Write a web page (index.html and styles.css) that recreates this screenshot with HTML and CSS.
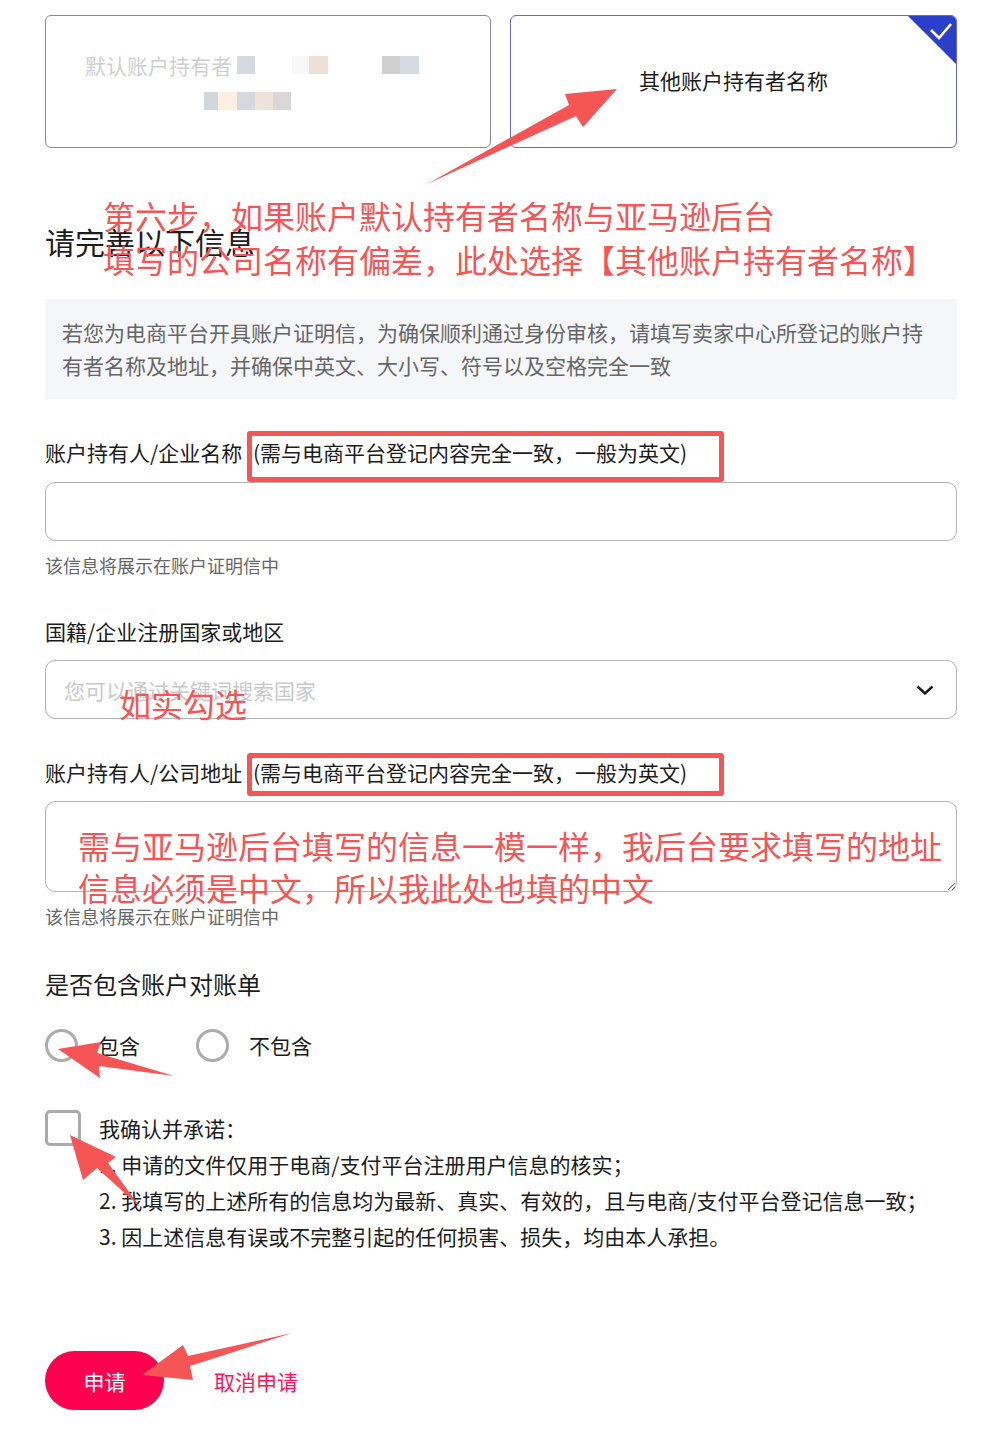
FILE: index.html
```html
<!DOCTYPE html>
<html lang="zh-CN">
  <head>
    <meta charset="UTF-8" />
    <meta name="viewport" content="width=device-width, initial-scale=1.0" />
    <title>开具账户证明信</title>
    <link rel="stylesheet" href="styles.css">
  </head>
  <body>
    <main class="page">
      <!-- 持有者名称选择 -->
      <div class="cards">
        <div class="card">
          <div class="blur">
            <div class="blur-row">
              <span class="muted">默认账户持有者</span>
              <span class="px px-a"></span>
              <span class="px px-b"></span>
              <span class="px px-c"></span>
              <span class="px px-d"></span>
              <span class="px px-e"></span>
            </div>
            <div class="blur-row second">
              <span class="px px-f"></span>
              <span class="px px-g"></span>
              <span class="px px-h"></span>
              <span class="px px-i"></span>
              <span class="px px-j"></span>
            </div>
          </div>
        </div>
        <div class="card active">
          <span class="card-text">其他账户持有者名称</span>
          <span class="corner">
            <svg width="48" height="48" viewBox="0 0 48 48">
              <polygon points="0,0 48,0 48,48" fill="#2b40c8" />
              <polyline points="23,14 31,22 43,8" fill="none" stroke="#fff" stroke-width="2.6" />
            </svg>
          </span>
        </div>
      </div>

      <!-- 标题 -->
      <div class="title-wrap">
        <h2 class="title">请完善以下信息</h2>
        <p class="tip tip-step">第六步，如果账户默认持有者名称与亚马逊后台<br>填写的公司名称有偏差，此处选择【其他账户持有者名称】</p>
      </div>

      <div class="info">若您为电商平台开具账户证明信，为确保顺利通过身份审核，请填写卖家中心所登记的账户持有者名称及地址，并确保中英文、大小写、符号以及空格完全一致</div>

      <!-- 企业名称 -->
      <div class="field">
        <label class="label">账户持有人/企业名称 <span class="hint">(需与电商平台登记内容完全一致，一般为英文)</span><span class="mark mark-name"></span></label>
        <div class="input"></div>
        <div class="help">该信息将展示在账户证明信中</div>
      </div>

      <!-- 国家 -->
      <div class="field">
        <label class="label">国籍/企业注册国家或地区</label>
        <div class="select">
          <span class="placeholder">您可以通过关键词搜索国家</span>
          <svg class="chevron" width="18" height="10" viewBox="0 0 18 10">
            <polyline points="1.5,1.5 9,8.5 16.5,1.5" fill="none" stroke="#1a1a1a" stroke-width="2.4" />
          </svg>
          <span class="tip tip-select">如实勾选</span>
        </div>
      </div>

      <!-- 地址 -->
      <div class="field">
        <label class="label">账户持有人/公司地址 <span class="hint">(需与电商平台登记内容完全一致，一般为英文)</span><span class="mark mark-addr"></span></label>
        <div class="area-wrap">
          <textarea class="textarea"></textarea>
          <span class="tip tip-area">需与亚马逊后台填写的信息一模一样，我后台要求填写的地址<br>信息必须是中文，所以我此处也填的中文</span>
        </div>
        <div class="help">该信息将展示在账户证明信中</div>
      </div>

      <!-- 对账单 -->
      <h3 class="subtitle">是否包含账户对账单</h3>
      <div class="radios">
        <div class="radio"><span class="circle"></span>包含</div>
        <div class="radio"><span class="circle"></span>不包含</div>
      </div>

      <div class="agree">
        <span class="checkbox"></span>
        <div class="terms">
          <div>我确认并承诺：</div>
          <div>1. 申请的文件仅用于电商/支付平台注册用户信息的核实；</div>
          <div>2. 我填写的上述所有的信息均为最新、真实、有效的，且与电商/支付平台登记信息一致；</div>
          <div>3. 因上述信息有误或不完整引起的任何损害、损失，均由本人承担。</div>
        </div>
      </div>

      <div class="actions">
        <button class="btn">申请</button>
        <a class="cancel">取消申请</a>
      </div>
    </main>

    <!-- 标注箭头 -->
    <svg class="arrows" width="1001" height="1436" viewBox="0 0 1001 1436">
      <polygon points="427,184 569,105 565,94 617,89 583,127 576,116" />
      <polygon points="58,1049 101,1042 97,1053 174,1076 99,1066 100,1078" />
      <polygon points="70,1135 116,1157 108,1163 140,1207 97,1168 83,1180" />
      <polygon points="142,1375 183,1345 188,1356 292,1333 190,1366 193,1380" />
    </svg>
  </body>
</html>
```

FILE: styles.css
```css
body {
  margin: 0;
  padding: 0;
  position: relative;
  background: #fff;
  color: #1c1c1c;
  font-family: "Noto Sans CJK SC", "Noto Sans", sans-serif;
}

.page {
  width: 912px;
  margin-left: 45px;
  padding-top: 15px;
  padding-bottom: 26px;
}

/* ===== 选择卡片 ===== */
.cards {
  display: grid;
  grid-template-columns: 446px 447px;
  gap: 19px;
}

.card {
  height: 133px;
  box-sizing: border-box;
  border: 1px solid #8c8c8c;
  border-radius: 6px;
  position: relative;
  overflow: hidden;
}

.card.active {
  border-color: #6767cc;
  display: flex;
  justify-content: center;
  align-items: center;
  font-size: 21px;
  color: #1c1c1c;
}

.card-text {
  margin-bottom: 3px;
}

.corner {
  position: absolute;
  top: 0;
  right: 0;
  width: 48px;
  height: 48px;
}

.corner svg {
  display: block;
}

.blur {
  padding: 31px 0 0 39px;
}

.blur-row {
  display: flex;
  align-items: center;
  height: 36px;
}

.blur-row.second {
  padding-left: 119px;
}

.muted {
  font-size: 21px;
  color: #cfcfcf;
  white-space: nowrap;
}

.px {
  display: inline-block;
  height: 18px;
  width: 18px;
}

.px-a { background: #d5dae2; margin-left: 5px; }
.px-b { background: #f8f8f8; margin-left: 37px; width: 17px; }
.px-c { background: #ede0d4; width: 19px; }
.px-d { background: #d0d0d0; margin-left: 54px; }
.px-e { background: #d4dbe4; width: 19px; }
.px-f { background: #d3d6db; width: 14px; }
.px-g { background: #feefe2; width: 19px; }
.px-h { background: #d4d8df; }
.px-i { background: #ede3d9; }
.px-j { background: #dbd7d7; }

/* ===== 标题与提示 ===== */
.title-wrap {
  position: relative;
  margin-top: 73px;
}

.title {
  margin: 0;
  font-size: 30px;
  line-height: 40px;
  font-weight: 400;
}

.tip {
  position: absolute;
  margin: 0;
  color: #f65555;
  font-size: 32px;
  white-space: nowrap;
}

.tip-step {
  left: 58px;
  top: -28px;
  line-height: 44px;
}

.info {
  margin-top: 38px;
  background: #f5f6f8;
  padding: 17px;
  font-size: 21px;
  line-height: 33px;
  color: #666;
}

/* ===== 表单 ===== */
.field {
  margin-top: 38px;
}

.label {
  display: block;
  position: relative;
  font-size: 21px;
  line-height: 30px;
}

.hint {
  margin-left: 6px;
}

.mark {
  position: absolute;
  left: 202px;
  width: 477px;
  box-sizing: border-box;
  border: 5px solid #f65555;
  border-radius: 3px;
}

.mark-name {
  top: -6px;
  height: 51px;
}

.mark-addr {
  top: -4px;
  height: 43px;
}

.input,
.select,
.textarea {
  display: block;
  width: 100%;
  box-sizing: border-box;
  border: 1px solid #b4b4b4;
  border-radius: 10px;
  margin-top: 14px;
  background: #fff;
}

.input {
  height: 59px;
  margin-top: 15px;
}

.select {
  height: 59px;
  position: relative;
  display: flex;
  align-items: center;
  justify-content: space-between;
  padding: 0 22px 0 18px;
}

.placeholder {
  font-size: 21px;
  color: #c9c9c9;
}

.chevron {
  display: block;
}

.tip-select {
  left: 73px;
  top: 22px;
  line-height: 40px;
}

.area-wrap {
  position: relative;
}

.textarea {
  height: 91px;
  resize: vertical;
  font-family: inherit;
}

.tip-area {
  left: 33px;
  top: 23px;
  line-height: 42px;
}

.help {
  margin-top: 11px;
  font-size: 18px;
  line-height: 26px;
  color: #666;
}

/* ===== 对账单 ===== */
.subtitle {
  margin: 38px 0 0;
  font-size: 24px;
  line-height: 34px;
  font-weight: 400;
}

.radios {
  display: flex;
  gap: 56px;
  margin-top: 27px;
}

.radio {
  display: flex;
  align-items: center;
  gap: 20px;
  font-size: 21px;
  line-height: 34px;
}

.circle {
  width: 33px;
  height: 33px;
  box-sizing: border-box;
  border: 3px solid #ababab;
  border-radius: 50%;
}

.agree {
  display: flex;
  gap: 18px;
  margin-top: 48px;
}

.checkbox {
  flex: none;
  width: 36px;
  height: 36px;
  box-sizing: border-box;
  border: 3px solid #ababab;
  border-radius: 5px;
}

.terms {
  font-size: 21px;
  line-height: 36px;
}

/* ===== 按钮 ===== */
.actions {
  display: flex;
  align-items: center;
  gap: 50px;
  margin-top: 97px;
}

.btn {
  width: 119px;
  height: 59px;
  border: none;
  border-radius: 30px;
  background: #ff0050;
  color: #fff;
  font-family: inherit;
  font-size: 21px;
}

.cancel {
  font-size: 21px;
  color: #ff1458;
}

.arrows {
  position: absolute;
  top: 0;
  left: 0;
  pointer-events: none;
}

.arrows polygon {
  fill: #f65555;
}
```
